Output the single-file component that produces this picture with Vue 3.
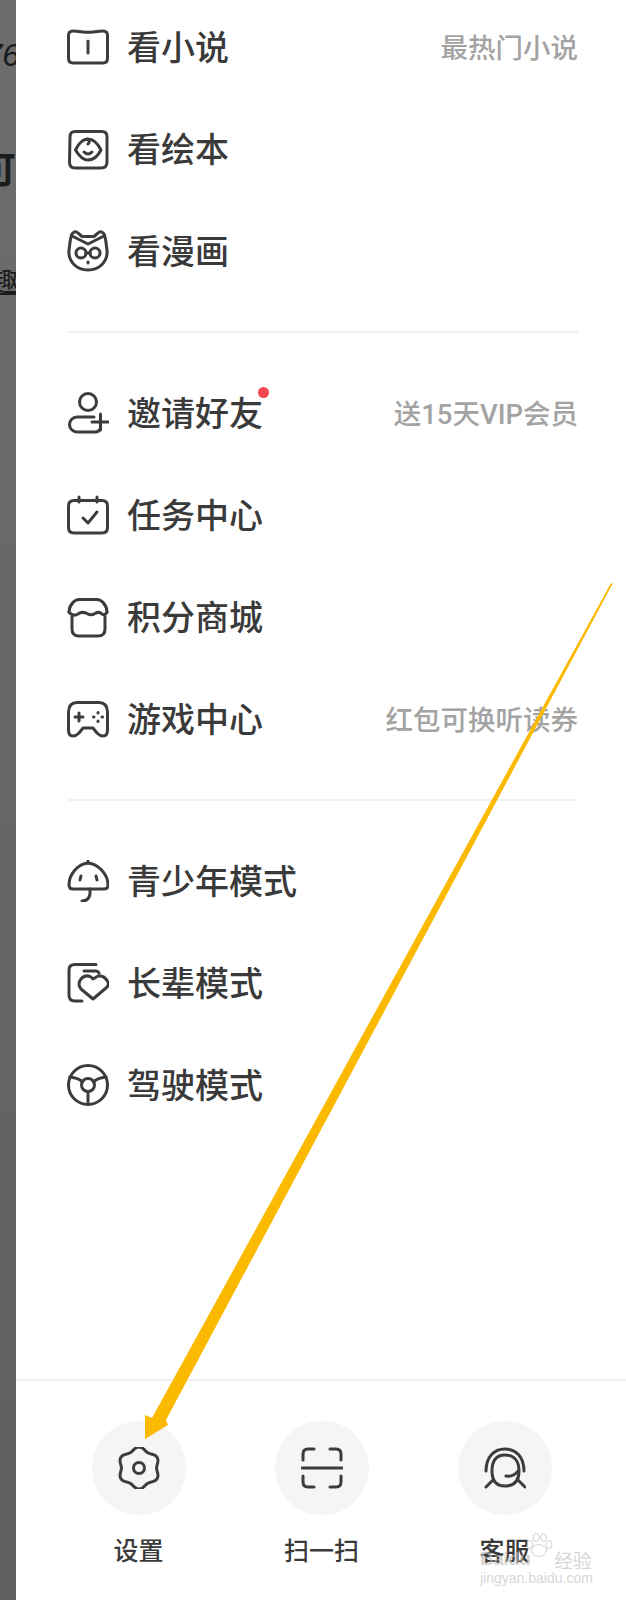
<template>
  <div class="page">
    <aside class="behind">
      <span class="peek peek-num">76</span>
      <span class="peek peek-title">可</span>
      <span class="peek peek-link">趣</span>
    </aside>

    <main class="drawer">
      <section v-for="(group, i) in groups" :key="i" class="group">
        <div v-for="item in group" :key="item.label" class="row">
          <svg class="icon" viewBox="0 0 42 42" v-html="item.icon"></svg>
          <span class="label">
            {{ item.label }}
            <i v-if="item.dot" class="dot"></i>
          </span>
          <span v-if="item.hint" class="hint">{{ item.hint }}</span>
        </div>
      </section>

      <footer class="tools">
        <div v-for="tool in tools" :key="tool.label" class="tool">
          <div class="tool-circle">
            <svg class="icon" viewBox="0 0 42 42" v-html="tool.icon"></svg>
          </div>
          <span class="tool-label">{{ tool.label }}</span>
        </div>
      </footer>
    </main>

    <!-- annotation arrow drawn over the screenshot -->
    <svg class="arrow" viewBox="0 0 626 1600">
      <polygon points="611,583 612.5,584 166,1420 168,1425 145,1439 145,1415 152,1418" fill="#fbb900" />
    </svg>

    <div class="watermark">
      <svg class="paw" viewBox="0 0 60 50">
        <ellipse cx="30" cy="36" rx="15" ry="12" />
        <ellipse cx="12" cy="24" rx="6" ry="8" />
        <ellipse cx="24" cy="10" rx="6" ry="8" />
        <ellipse cx="39" cy="10" rx="6" ry="8" />
        <ellipse cx="50" cy="24" rx="6" ry="8" />
      </svg>
      <div class="wm-top">Baidu<span class="wm-cn">经验</span></div>
      <div class="wm-url">jingyan.baidu.com</div>
    </div>
  </div>
</template>

<script setup>
// gear outline: six soft lobes, one pointing straight up
const gearPath = () => {
  const pts = []
  for (let i = 0; i < 96; i++) {
    const a = (i / 96) * Math.PI * 2
    const r = 19.3 + 1.7 * Math.cos(6 * a)
    pts.push(`${(21 + r * Math.sin(a)).toFixed(2)} ${(21 - r * Math.cos(a)).toFixed(2)}`)
  }
  return `M${pts.join('L')}Z`
}

const groups = [
  [
    {
      label: '看小说',
      hint: '最热门小说',
      icon: '<path d="M6 5C12 5 16 6.200 21 6.200S30 5 36 5Q40.500 5 40.500 9.500V32Q40.500 37 36 37H6Q1.500 37 1.500 32V9.500Q1.500 5 6 5Z"/><path d="M21 15V27"/>'
    },
    {
      label: '看绘本',
      icon: '<path d="M9 3.500H35Q40 3.500 40 9V34Q40 40 34 40H8Q2.500 40 2.500 34L3 9Q3 3 9 3.500Z"/><path d="M8.500 22C12 14.500 17 11 21 11C27 11 31 16 34 22C31 28 26 32 21 32C16 32 12 28 8.500 22Z"/><path d="M17 24Q21 28 25 24M20 11Q24 13 21 16"/>'
    },
    {
      label: '看漫画',
      icon: '<path d="M5 4Q8 0 11 3L15 6.500H27L31 3Q34 0 37 4C39 8 39 14 40 20C41 32 32 40 21 40C10 40 1 32 2 20C3 14 3 8 5 4Z"/><path d="M5 6L21 14L37 6"/><circle cx="14" cy="23" r="5"/><circle cx="28" cy="23" r="5"/><path d="M19 23H23M21 32V33"/>'
    }
  ],
  [
    {
      label: '邀请好友',
      dot: true,
      hint: '送15天VIP会员',
      icon: '<circle cx="21" cy="10" r="8.500"/><path d="M27 25H10A7.500 7.500 0 0 0 10 40H28Q32 40 33 37"/><path d="M25 30H41M33.500 22V38"/>'
    },
    {
      label: '任务中心',
      icon: '<path d="M7 6.500H35Q40.500 6.500 40.500 12V33.500Q40.500 39 35 39H7Q1.500 39 1.500 33.500V12Q1.500 6.500 7 6.500Z"/><path d="M12 3V8M30 3V8"/><path d="M16 24L21 29L30 18"/>'
    },
    {
      label: '积分商城',
      icon: '<path d="M2 16C2 10 7 3.500 12 3.500H30C35 3.500 40 10 40 16"/><path d="M2 16Q6 21 11 18Q15 15 20 17.500Q24 20 28 17.500Q32 15 35 18Q38 20 40 16"/><path d="M5 21V33Q5 40 12 40H31Q38 40 38 33V21"/>'
    },
    {
      label: '游戏中心',
      hint: '红包可换听读券',
      icon: '<path d="M10 4.500H32Q40 4.500 40.500 14V32Q40.500 38 36 38Q33 38 30 35L26 30H16L12 35Q9 38 6 38Q1.500 38 1.500 32V14Q2 4.500 10 4.500Z"/><path d="M8 19H16M12 15V23"/><path d="M31 14.500V15M31 23V23.500M26.500 19H27M35 19H35.500"/>'
    }
  ],
  [
    {
      label: '青少年模式',
      icon: '<path d="M21 3C31 4 41 14 41 25Q41 29 37 29H6Q2 29 2 25C2 14 11 4 21 3Z"/><path d="M21 1V3"/><path d="M14 16L13 20M29 16L30 20"/><path d="M23 29V34Q22 41 15 41"/>'
    },
    {
      label: '长辈模式',
      icon: '<path d="M29 2.500H8Q2 2.500 2 8V33Q2 39 8 39H15"/><path d="M17 9H29Q31 9 32 11"/><path d="M26 37L14 27Q10 22 14 17Q18 12 24 15L26 17L31 14Q37 13 41 20Q42 24 39 26Z"/>'
    },
    {
      label: '驾驶模式',
      icon: '<circle cx="21" cy="21" r="19.500"/><circle cx="21" cy="21" r="6.500"/><path d="M3 13Q12 14 15.500 18M39 13Q30 14 26.500 18M21 27.500V40"/>'
    }
  ]
]

const tools = [
  {
    label: '设置',
    icon: `<path d="${gearPath()}"/><circle cx="21" cy="21" r="5.500"/>`
  },
  {
    label: '扫一扫',
    icon: '<path d="M13 2H7Q2 2 2 7V13M29 2H35Q40 2 40 7V13M13 40H7Q2 40 2 35V29M29 40H35Q40 40 40 35V29"/><path d="M1 21H41"/>'
  },
  {
    label: '客服',
    icon: '<path d="M2 24C2 10 10 2 21 2S40 10 40 24"/><path d="M8 24C8 14 12 8 21 8C30 8 35 14 35 24C35 34 30 39 21 39C12 39 8 34 8 24Z"/><path d="M22 29Q30 30 34 24M2 40L9 33M41 40L34 33"/>'
  }
]
</script>

<style>
html,
body {
  margin: 0;
  background: #fff;
}
</style>

<style scoped>
.page {
  position: relative;
  display: flex;
  width: 626px;
  height: 1600px;
  overflow: hidden;
  font-family: "Noto Sans CJK SC", "Noto Sans", sans-serif;
  color: #3a3a3a;
}

.behind {
  position: relative;
  flex: 0 0 16px;
  overflow: hidden;
  background: linear-gradient(180deg, #6d6d6d, #5f5f5f);
  color: #1b1b1b;
}

.peek {
  position: absolute;
  white-space: nowrap;
}

.peek-num {
  top: 37px;
  right: -4px;
  font-size: 32px;
  font-style: italic;
  font-family: "Liberation Sans", sans-serif;
}

.peek-title {
  top: 149px;
  right: 0;
  font-size: 36px;
  font-weight: 700;
  line-height: 1;
}

.peek-link {
  top: 266px;
  right: -2px;
  font-size: 26px;
  line-height: 1.1;
  text-decoration: underline;
}

.drawer {
  flex: 1;
  display: flex;
  flex-direction: column;
  min-width: 0;
  background: #fff;
}

.group {
  margin: 0 48px 0 52px;
  padding: 29px 0;
  border-bottom: 2px solid #f0f0f0;
}

.group:first-child {
  margin-top: -33px;
}

.group:nth-child(3) {
  border-bottom: 0;
}

.row {
  display: flex;
  align-items: center;
  height: 102px;
}

.icon {
  flex: none;
  width: 42px;
  height: 42px;
  fill: none;
  stroke: #3c3c3c;
  stroke-width: 3;
  stroke-linecap: round;
  stroke-linejoin: round;
}

.row .icon {
  margin-left: -1px;
}

.label {
  position: relative;
  margin-left: 18px;
  padding-bottom: 2px;
  font-size: 34px;
  font-weight: 500;
  line-height: 40px;
}

.dot {
  position: absolute;
  top: -5px;
  right: -6px;
  width: 11px;
  height: 11px;
  border-radius: 50%;
  background: #f4474f;
}

.hint {
  margin-left: auto;
  padding-bottom: 2px;
  font-family: Roboto, "Noto Sans CJK SC", sans-serif;
  font-size: 27.5px;
  font-weight: 500;
  color: #a3a3a3;
}

.tools {
  margin-top: auto;
  display: grid;
  grid-template-columns: repeat(3, 183px);
  height: 219px;
  padding-left: 31px;
  border-top: 2px solid #f0f0f0;
}

.tool {
  display: flex;
  flex-direction: column;
  align-items: center;
  padding-top: 40px;
}

.tool-circle {
  display: flex;
  align-items: center;
  justify-content: center;
  width: 94px;
  height: 94px;
  border-radius: 50%;
  background: #f5f5f5;
}

.tool-label {
  margin-top: 16px;
  font-size: 25px;
  font-weight: 500;
  line-height: 36px;
}

.arrow {
  position: absolute;
  inset: 0;
  width: 626px;
  height: 1600px;
  pointer-events: none;
}

.watermark {
  position: absolute;
  left: 480px;
  top: 1530px;
  width: 136px;
  color: rgba(190, 190, 190, 0.65);
  pointer-events: none;
}

.paw {
  position: absolute;
  left: 44px;
  top: 2px;
  width: 30px;
  height: 26px;
  fill: rgba(255, 255, 255, 0.35);
  stroke: rgba(190, 190, 190, 0.7);
  stroke-width: 2;
}

.wm-top {
  position: relative;
  display: flex;
  align-items: center;
  height: 34px;
  padding-top: 12px;
  font-family: "Liberation Sans", sans-serif;
  font-size: 19px;
  font-weight: 700;
  letter-spacing: -0.5px;
}

.wm-cn {
  margin-left: 24px;
  font-family: "Noto Sans CJK SC", sans-serif;
  font-size: 19px;
  font-weight: 400;
}

.wm-url {
  margin-top: -8px;
  font-family: "Liberation Sans", sans-serif;
  font-size: 14px;
  line-height: 20px;
  white-space: nowrap;
}
</style>
